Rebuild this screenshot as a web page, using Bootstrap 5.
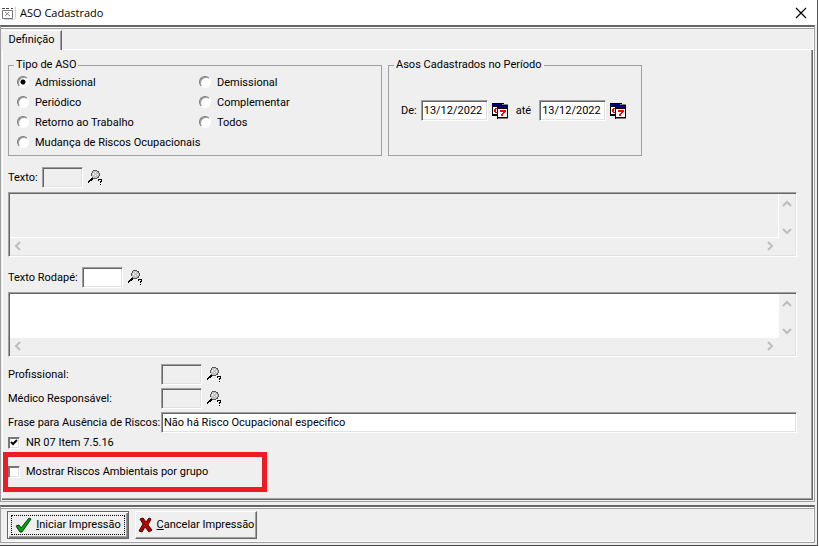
<!DOCTYPE html>
<html lang="pt-BR">
<head>
<meta charset="utf-8">
<meta name="viewport" content="width=device-width, initial-scale=1">
<title>ASO Cadastrado</title>
<link href="https://cdn.jsdelivr.net/npm/bootstrap@5.3.0/dist/css/bootstrap.min.css" rel="stylesheet">
<style>
:root{--face:#efefef;--mid:#9f9f9f;--dark:#666;--soft:#e2e2e2}
body{background:#fff;color:#000;font:11px/14px Roboto,"Liberation Sans",sans-serif}
.win{background:var(--face);border-right:1px solid #555;border-bottom:1px solid #444;margin-right:1px}
.titlebar{background:#fff;height:25px;font:11px/16px "Open Sans","Noto Sans",sans-serif}
.close-btn{width:32px;height:24px;border:0;background:none}
.frame{border:1px solid var(--mid);border-top:2px solid var(--dark);box-shadow:inset 0 1px #fff,inset 0 2px var(--mid),inset -1px 0 #fff;padding:3px 1px 1px 1px;margin-right:2px}
.tab-btn{border:0;border-top:1px solid #fff;border-right:1px solid var(--dark);box-shadow:inset -1px 0 var(--mid);background:var(--face);width:60px;height:20px;padding:0 0 2px;color:#000}
.tab-rest{border-bottom:1px solid #fff}
.pane{border-right:1px solid var(--dark);border-bottom:1px solid var(--dark);box-shadow:inset -1px -1px var(--mid),inset 1px 0 #fff;padding:8px 15px 6px 6px}
.groups{gap:6px}
.group{border:1px solid var(--mid);box-shadow:none;margin:0;padding:0 8px;height:98px;min-width:0}
.group legend{float:none;width:auto;font-size:11px;line-height:14px;margin:0 0 0 -3px;padding:0 2px;background:var(--face)}
.group-a{width:374px}.group-b{width:254px}
.radios{grid-template-columns:182px 1fr;grid-auto-rows:20px;margin-top:1px}
.radios .span{grid-column:span 2}
.opt-radio{appearance:none;width:12px;height:12px;margin:0 6px 2px 0;border-radius:50%;background:#fff;border:1px solid;border-color:#777 #fff #fff #777;box-shadow:inset 1px 1px #999;flex:none}
.opt-radio:checked{background:radial-gradient(circle,#000 2px,#fff 3px)}
.opt-check{appearance:none;width:12px;height:12px;margin:0;background:#fff;border:1px solid;border-color:#777 #fff #fff #777;box-shadow:inset 1px 1px #777,inset -1px -1px var(--soft);flex:none}
.check-holder{display:grid;margin-right:6px}
.check-holder>*{grid-area:1/1}
.check-holder svg{pointer-events:none}
.sunk{border:1px solid;border-color:var(--mid) #fff #fff var(--mid);box-shadow:inset 1px 1px var(--dark),inset -1px -1px var(--soft);background:#fff;border-radius:0;color:#000;font:inherit;height:21px;padding:0 2px;min-width:0;outline:0}
.sunk.off{background:var(--face)}
.code{width:41px;margin-right:5px}.date{width:67px}
.lookup{border:0;background:none;padding:0;width:16px;height:16px;display:block;line-height:0;flex:none}
.period{margin-top:28px}
.form-line{height:21px;margin-top:3px}
.form-line.after-groups{margin:11px 0 4px}
.form-line.after-memo{margin:10px 0 4px}
.form-line.after-last-memo{margin-top:7px}
.form-line .near{margin-right:4px}
.lbl-wide{width:153px;white-space:nowrap}
.memo{height:65px;border:1px solid;border-color:var(--mid) #fff #fff var(--mid);background:var(--face);padding:1px;box-shadow:inset 1px 1px var(--dark),inset -1px -1px var(--soft);grid-template-columns:1fr 16px;grid-template-rows:1fr 17px}
.memo textarea{border:0;resize:none;background:#fff;font:inherit;padding:2px;width:100%;height:100%;min-height:0;outline:0;overflow:hidden;display:block}
.memo.off textarea{background:var(--face);border-right:1px solid #fff;border-bottom:1px solid #fff}
.memo path{fill:none;stroke:#bdbdbd;stroke-width:2}
.opt-line{margin-top:3px}
.callout{border:5px solid #ed1c24;width:264px;height:40px;margin:2px 0 0 -5px}
.footer-bar{gap:6px;border:1px solid var(--mid);border-top:2px solid var(--dark);box-shadow:inset 0 1px #fff,inset 0 2px var(--mid),inset -1px -1px #fff;padding:4px 6px 3px;margin:3px 2px 2px 0}
.cmd{height:28px;width:122px;background:var(--face);border:1px solid;border-color:#fff #666 #666 #fff;box-shadow:inset -1px -1px #9f9f9f;color:#000;padding:0;white-space:nowrap}
.cmd svg{flex:none}
.cmd.main{border-color:#666;box-shadow:inset 1px 1px #fff,inset -1px -1px #777,inset -2px -2px #9f9f9f}
.cmd.main>span{border:1px dotted #000;margin:3px;height:20px}
</style>
<script src="https://cdn.jsdelivr.net/npm/bootstrap@5.3.0/dist/js/bootstrap.bundle.min.js"></script>
</head>
<body>
<svg width="0" height="0" class="position-absolute" aria-hidden="true">
  <symbol id="cal" viewBox="0 0 16 17">
    <g shape-rendering="crispEdges">
      <path fill="#000" d="M0 0h12v13H0z"/><path fill="#000080" d="M0 1h10v2H0z"/><path fill="#fff" d="M1 4h5v7H1z"/>
      <path fill="#e00" d="M3 5h2v1H3zM2 6h2v3H2zM3 9h2v1H3z"/>
      <path fill="#808080" d="M10 1h6v1h-6z"/><path fill="#000" d="M5 2h11v14H5z"/><path fill="#000080" d="M6 3h9v2H6z"/><path fill="#fff" d="M6 6h9v8H6z"/><path fill="#808080" d="M6 15h10v1H6z"/>
      <path fill="#f00" d="M8 7h6v2h-1v1h-1v1h-1v2H9v-2h1v-1h1V9H8z"/>
    </g>
  </symbol>
  <symbol id="lens" viewBox="0 0 16 16">
    <g shape-rendering="crispEdges">
      <path fill="#000" d="M0 11h1v-1h1V9h1V8h1V7h2v1h1v1H5v1H4v1H2v1H1v1H0z"/>
      <path fill="#555" d="M5 0h4v1h2v2h1v3h-1v2H9v1H5V8H4V6H3V3h1V1h1z"/>
      <path fill="#c4c4c4" d="M5 1h4v1h1v1h1v3h-1v1H9v1H5V7H4V3h1z"/>
      <path fill="#fff" d="M5 3h1v2H5zM7 2h1v1H7zM7 5h1v1H7zM9 4h1v1H9z"/>
      <path fill="#000" d="M10 9h4v3h-1v1h-1v-2h1v-1h-2v1h-1zM12 14h1v1h-1z"/>
    </g>
  </symbol>
</svg>
<div class="win min-vh-100 d-flex flex-column">
  <header class="titlebar d-flex align-items-center">
    <svg width="16" height="14" viewBox="0 0 16 14" class="mx-1 ms-0 flex-shrink-0" aria-hidden="true" fill="none">
      <path d="M2.500 4.500h10v8h-10z" stroke="#777" fill="#fff"/><path d="M2 2.500h3M6 2.500h3M11 2.500h2" stroke="#444"/><path d="M5 6l5 4M9 6l-4 4" stroke="#888"/><path d="M15.500 1v10q0 2-2 2.500H4" stroke="#c9d2ea"/>
    </svg>
    <span>ASO Cadastrado</span>
    <button type="button" class="close-btn ms-auto d-flex align-items-center justify-content-center p-0" aria-label="Fechar">
      <svg width="12" height="12" viewBox="0 0 12 12"><path d="M1 1l10 10M11 1L1 11" stroke="#000" stroke-width="1.200"/></svg>
    </button>
  </header>
  <main class="frame flex-grow-1 d-flex flex-column">
    <div class="d-flex" role="tablist">
      <button type="button" class="tab-btn" role="tab" aria-selected="true">Definição</button>
      <div class="tab-rest flex-grow-1"></div>
    </div>
    <form id="aso" class="pane flex-grow-1">
      <div class="groups d-flex">
        <fieldset class="group group-a">
          <legend>Tipo de ASO</legend>
          <div class="radios d-grid">
            <label class="d-flex align-items-center"><input class="opt-radio" type="radio" name="tipo" checked>Admissional</label>
            <label class="d-flex align-items-center"><input class="opt-radio" type="radio" name="tipo">Demissional</label>
            <label class="d-flex align-items-center"><input class="opt-radio" type="radio" name="tipo">Periódico</label>
            <label class="d-flex align-items-center"><input class="opt-radio" type="radio" name="tipo">Complementar</label>
            <label class="d-flex align-items-center"><input class="opt-radio" type="radio" name="tipo">Retorno ao Trabalho</label>
            <label class="d-flex align-items-center"><input class="opt-radio" type="radio" name="tipo">Todos</label>
            <label class="span d-flex align-items-center"><input class="opt-radio" type="radio" name="tipo">Mudança de Riscos Ocupacionais</label>
          </div>
        </fieldset>
        <fieldset class="group group-b">
          <legend>Asos Cadastrados no Período</legend>
          <div class="period d-flex align-items-center ps-1">
            <label for="de" class="me-1">De:</label>
            <input id="de" class="sunk date" type="text" value="13/12/2022">
            <button type="button" class="lookup ms-1 me-2" aria-label="Calendário inicial"><svg width="16" height="17"><use href="#cal"/></svg></button>
            <label for="ate" class="me-2">até</label>
            <input id="ate" class="sunk date" type="text" value="13/12/2022">
            <button type="button" class="lookup ms-1" aria-label="Calendário final"><svg width="16" height="17"><use href="#cal"/></svg></button>
          </div>
        </fieldset>
      </div>
      <div class="form-line after-groups d-flex align-items-center">
        <label for="texto" class="near">Texto:</label>
        <input id="texto" class="sunk off code" type="text" readonly>
        <button type="button" class="lookup" aria-label="Buscar texto"><svg width="16" height="16"><use href="#lens"/></svg></button>
      </div>
      <div class="memo off d-grid">
        <textarea aria-label="Texto" readonly></textarea>
        <div class="d-flex flex-column justify-content-between"><svg width="16" height="16" viewBox="0 0 16 16"><path d="M4 12l4-4 4 4"/></svg><svg width="16" height="16" viewBox="0 0 16 16"><path d="M4 7l4 4 4-4"/></svg></div>
        <div class="d-flex justify-content-between"><svg width="16" height="16" viewBox="0 0 16 16"><path d="M10 4L6 8l4 4"/></svg><svg width="16" height="16" viewBox="0 0 16 16"><path d="M5 4l4 4-4 4"/></svg></div>
      </div>
      <div class="form-line after-memo d-flex align-items-center">
        <label for="rodape" class="near">Texto Rodapé:</label>
        <input id="rodape" class="sunk code" type="text">
        <button type="button" class="lookup" aria-label="Buscar texto do rodapé"><svg width="16" height="16"><use href="#lens"/></svg></button>
      </div>
      <div class="memo d-grid">
        <textarea aria-label="Texto Rodapé"></textarea>
        <div class="d-flex flex-column justify-content-between"><svg width="16" height="16" viewBox="0 0 16 16"><path d="M4 12l4-4 4 4"/></svg><svg width="16" height="16" viewBox="0 0 16 16"><path d="M4 7l4 4 4-4"/></svg></div>
        <div class="d-flex justify-content-between"><svg width="16" height="16" viewBox="0 0 16 16"><path d="M10 4L6 8l4 4"/></svg><svg width="16" height="16" viewBox="0 0 16 16"><path d="M5 4l4 4-4 4"/></svg></div>
      </div>
      <div class="form-line after-last-memo d-flex align-items-center">
        <label for="prof" class="lbl-wide">Profissional:</label>
        <input id="prof" class="sunk off code" type="text" readonly>
        <button type="button" class="lookup" aria-label="Buscar profissional"><svg width="16" height="16"><use href="#lens"/></svg></button>
      </div>
      <div class="form-line d-flex align-items-center">
        <label for="med" class="lbl-wide">Médico Responsável:</label>
        <input id="med" class="sunk off code" type="text" readonly>
        <button type="button" class="lookup" aria-label="Buscar médico"><svg width="16" height="16"><use href="#lens"/></svg></button>
      </div>
      <div class="form-line d-flex align-items-center">
        <label for="frase" class="lbl-wide">Frase para Ausência de Riscos:</label>
        <input id="frase" class="sunk flex-grow-1" type="text" value="Não há Risco Ocupacional específico">
      </div>
      <label class="opt-line d-flex align-items-center">
        <span class="check-holder"><input class="opt-check" type="checkbox" checked><svg width="12" height="12" viewBox="0 0 12 12"><path d="M3 5l2 2 4-4" fill="none" stroke="#000" stroke-width="2"/></svg></span>NR 07 Item 7.5.16
      </label>
      <div class="callout d-flex align-items-center">
        <label class="d-flex align-items-center"><span class="check-holder"><input class="opt-check" type="checkbox"></span>Mostrar Riscos Ambientais por grupo</label>
      </div>
    </form>
  </main>
  <footer class="footer-bar d-flex">
    <button type="submit" form="aso" class="cmd main"><span class="d-flex align-items-center justify-content-center gap-1">
      <svg width="17" height="16" viewBox="0 0 17 16" aria-hidden="true"><path d="M1 9l3-1 2 3 8-10 2 1L7 15H5z" fill="#00a800" stroke="#003c20" stroke-width="1"/></svg>
      <span><u>I</u>niciar Impressão</span></span></button>
    <button type="button" class="cmd d-flex align-items-center justify-content-center gap-1">
      <svg width="15" height="16" viewBox="0 0 15 16" aria-hidden="true"><path d="M2 2l3-1 3 4 3-4 2 1-3 6 4 5-3 2-4-5-3 5-3-1 4-7z" fill="#b00000" stroke="#500000" stroke-width="1"/></svg>
      <span><u>C</u>ancelar Impressão</span></button>
  </footer>
</div>
</body>
</html>
